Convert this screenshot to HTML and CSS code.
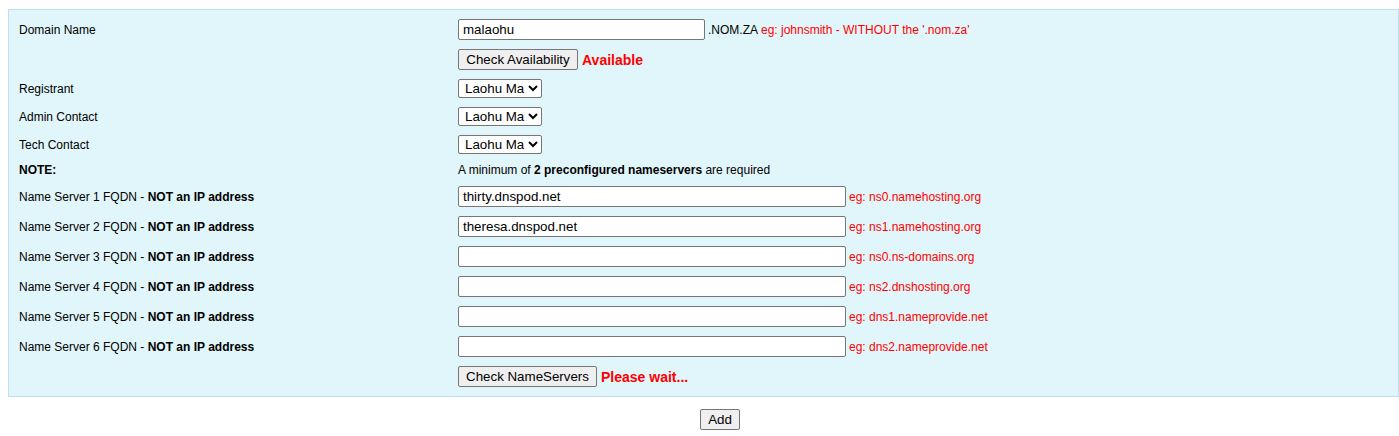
FILE: index.html
```html
<!DOCTYPE html>
<html>
<head>
<meta charset="utf-8">
<link rel="stylesheet" href="styles.css">
</head>
<body>
<form class="domain-form">
  <div class="panel">
    <div class="row row-30">
      <div class="label">Domain Name</div>
      <div class="field"><input class="txt txt-domain" type="text" value="malaohu"><span class="suffix">.NOM.ZA</span><span class="hint hint-domain">eg: johnsmith - WITHOUT the '.nom.za'</span></div>
    </div>
    <div class="row row-30">
      <div class="label"></div>
      <div class="field"><button type="button" class="btn btn-avail">Check Availability</button><span class="status">Available</span></div>
    </div>
    <div class="row row-28">
      <div class="label">Registrant</div>
      <div class="field"><select class="sel"><option>Laohu Ma</option></select></div>
    </div>
    <div class="row row-28">
      <div class="label">Admin Contact</div>
      <div class="field"><select class="sel"><option>Laohu Ma</option></select></div>
    </div>
    <div class="row row-28">
      <div class="label">Tech Contact</div>
      <div class="field"><select class="sel"><option>Laohu Ma</option></select></div>
    </div>
    <div class="row row-23 row-note">
      <div class="label"><b>NOTE:</b></div>
      <div class="field note">A minimum of <b>2 preconfigured nameservers</b> are required</div>
    </div>
    <div class="row row-30">
      <div class="label">Name Server 1 FQDN - <b>NOT an IP address</b></div>
      <div class="field"><input class="txt txt-ns" type="text" value="thirty.dnspod.net"><span class="hint">eg: ns0.namehosting.org</span></div>
    </div>
    <div class="row row-30">
      <div class="label">Name Server 2 FQDN - <b>NOT an IP address</b></div>
      <div class="field"><input class="txt txt-ns" type="text" value="theresa.dnspod.net"><span class="hint">eg: ns1.namehosting.org</span></div>
    </div>
    <div class="row row-30">
      <div class="label">Name Server 3 FQDN - <b>NOT an IP address</b></div>
      <div class="field"><input class="txt txt-ns" type="text" value=""><span class="hint">eg: ns0.ns-domains.org</span></div>
    </div>
    <div class="row row-30">
      <div class="label">Name Server 4 FQDN - <b>NOT an IP address</b></div>
      <div class="field"><input class="txt txt-ns" type="text" value=""><span class="hint">eg: ns2.dnshosting.org</span></div>
    </div>
    <div class="row row-30">
      <div class="label">Name Server 5 FQDN - <b>NOT an IP address</b></div>
      <div class="field"><input class="txt txt-ns" type="text" value=""><span class="hint">eg: dns1.nameprovide.net</span></div>
    </div>
    <div class="row row-30">
      <div class="label">Name Server 6 FQDN - <b>NOT an IP address</b></div>
      <div class="field"><input class="txt txt-ns" type="text" value=""><span class="hint">eg: dns2.nameprovide.net</span></div>
    </div>
    <div class="row row-30">
      <div class="label"></div>
      <div class="field"><button type="button" class="btn btn-ns">Check NameServers</button><span class="status status-wait">Please wait...</span></div>
    </div>
  </div>
  <div class="actions">
    <button type="button" class="btn btn-add">Add</button>
  </div>
</form>
</body>
</html>
```
FILE: styles.css
```css
html, body {
  margin: 0;
  padding: 0;
  background: #ffffff;
}

body {
  font-family: "Liberation Sans", Arial, sans-serif;
  font-size: 12px;
  color: #000;
  overflow: hidden;
}

.domain-form {
  margin: 0;
}

.panel {
  box-sizing: border-box;
  margin: 9px 0 0 8px;
  width: 1391px;
  background: #e1f6fa;
  border: 1px solid #c2def4;
  padding: 4px 0 5px 10px;
}

.row {
  display: flex;
  align-items: center;
}

.row-30 { height: 30px; }
.row-28 { height: 28px; }
.row-23 { height: 23px; }

.label {
  width: 439px;
  flex: none;
  white-space: nowrap;
  padding-top: 2px;
}

.row-note .label {
  padding-top: 0;
}

.field {
  display: flex;
  align-items: center;
  white-space: nowrap;
}

.note {
  display: block;
}

.txt {
  box-sizing: border-box;
  height: 21px;
  margin: 0;
  padding: 1px 4px;
  border: 1px solid #767676;
  border-radius: 2px;
  background: #fff;
  font-family: "Liberation Sans", Arial, sans-serif;
  font-size: 13.33px;
  color: #000;
}

.txt-domain { width: 247px; }
.txt-ns { width: 388px; }

.suffix {
  color: #000;
  margin-left: 3px;
  padding-top: 2px;
}

.hint {
  color: #ff0000;
  margin-left: 3px;
  padding-top: 2px;
}

.sel {
  box-sizing: border-box;
  width: 84px;
  height: 19px;
  margin: 0;
  padding: 0 0 0 2px;
  border: 1px solid #767676;
  border-radius: 2px;
  background: #fff;
  font-family: "Liberation Sans", Arial, sans-serif;
  font-size: 13.33px;
  color: #000;
}

.btn {
  box-sizing: border-box;
  height: 21px;
  margin: 0;
  padding: 0 6px;
  border: 1px solid #767676;
  border-radius: 2px;
  background: #efefef;
  font-family: "Liberation Sans", Arial, sans-serif;
  font-size: 13.33px;
  color: #000;
  white-space: nowrap;
}

.btn-avail { width: 120px; }
.btn-ns { width: 139px; }
.btn-add { width: 40px; padding: 0; }

.status {
  color: #ff0000;
  font-weight: bold;
  font-size: 14px;
  margin-left: 4px;
  padding-top: 2px;
}

.actions {
  display: flex;
  justify-content: center;
  padding-left: 41px;
  margin-top: 12px;
}
```
